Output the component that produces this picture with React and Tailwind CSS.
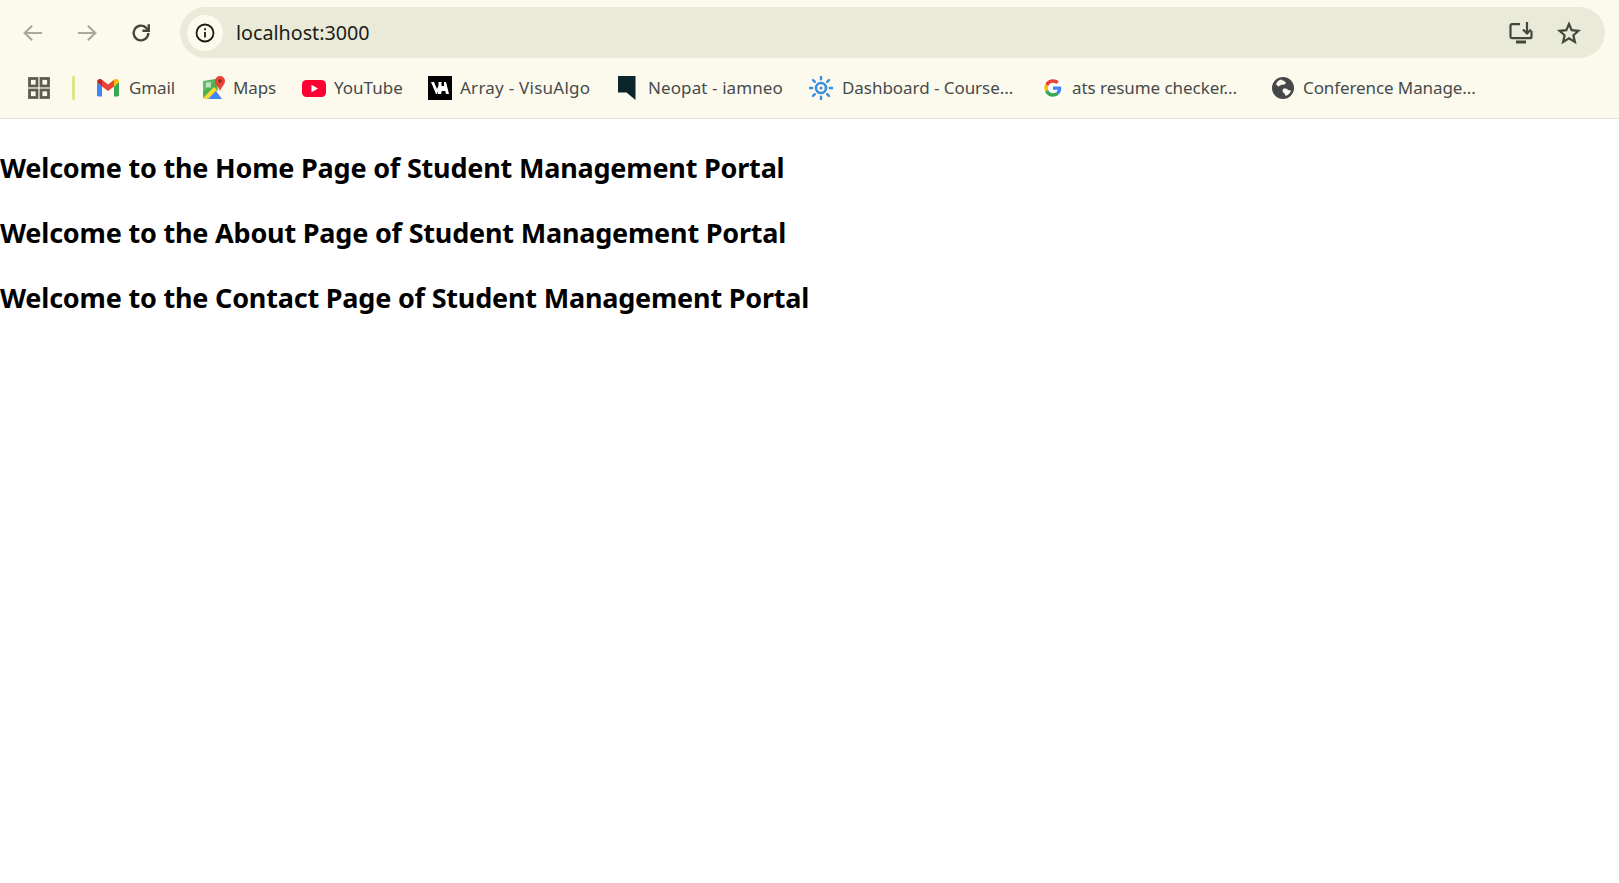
import React from "react";

const GridIcon = () => (
  <svg width="22" height="22" viewBox="0 0 22 22" fill="none" stroke="#5c5c50" strokeWidth="2.800">
    <rect x="1.500" y="1.500" width="7.500" height="7.500" />
    <rect x="13" y="1.500" width="7.500" height="7.500" />
    <rect x="1.500" y="13" width="7.500" height="7.500" />
    <rect x="13" y="13" width="7.500" height="7.500" />
  </svg>
);

const Gmail = () => (
  <svg width="22" height="18" viewBox="0 0 22 18">
    <path d="M0 3v13a1.500 1.500 0 0 0 1.500 1.500H5V7.500z" fill="#4285f4" />
    <path d="M17 7.500V17.500h3.500A1.500 1.500 0 0 0 22 16V3z" fill="#34a853" />
    <path d="M0 3a3 3 0 0 1 4.800-2.400L5 .8v6.700z" fill="#c5221f" />
    <path d="M5 .8 11 5.400 17 .8v6.700l-6 4.600-6-4.600z" fill="#ea4335" />
    <path d="M17 .8l.2-.2A3 3 0 0 1 22 3l-5 4.500z" fill="#fbbc04" />
  </svg>
);

const Maps = () => (
  <svg width="24" height="24" viewBox="0 0 24 24">
    <path d="M1 5 14 3 16 14 5 23 1 22z" fill="#4caf50" />
    <path d="M1 22 12 11l3 3-9 9z" fill="#fdd835" />
    <path d="M6 23l8-8 6 8z" fill="#4285f4" />
    <path d="M1 5h11L1 16z" fill="#66bb6a" />
    <rect x="4" y="6.500" width="5" height="5" fill="#e8f5e9" opacity=".7" />
    <path d="M18 0a5 5 0 0 1 5 5c0 3.500-3.500 5.500-5 10-1.500-4.500-5-6.500-5-10a5 5 0 0 1 5-5z" fill="#ea4335" />
    <circle cx="18" cy="5" r="1.800" fill="#8f2a22" />
  </svg>
);

const YouTube = () => (
  <svg width="24" height="17" viewBox="0 0 24 17">
    <rect width="24" height="17" rx="4.500" fill="#ff0033" />
    <path d="M9.500 4.800v7.400L16 8.500z" fill="#fff" />
  </svg>
);

const VisuAlgo = () => (
  <svg width="24" height="24" viewBox="0 0 24 24">
    <rect width="24" height="24" fill="#000" />
    <path d="M3 6h3l3 7 1.500-3.500V6h3v4l2.500 0V6h2l3 12h-3l-.8-3h-3.400l-.8 3h-3v-3l-1 3H8z" fill="#fff" />
  </svg>
);

const Neopat = () => (
  <svg width="18" height="24" viewBox="0 0 18 24">
    <path d="M0 0h17.500v24L8.500 16.500H0z" fill="#0a262c" />
  </svg>
);

const Sun = () => (
  <svg width="24" height="24" viewBox="0 0 24 24" fill="none">
    <circle cx="12" cy="12" r="5" stroke="#3b8ede" strokeWidth="2.600" />
    <circle cx="12" cy="12" r="1.600" fill="#3b8ede" />
    <g stroke="#3b8ede" strokeWidth="2.400" strokeLinecap="round">
      <path d="M12 .8v2.400M12 20.800v2.400M.8 12h2.400M20.800 12h2.400M4.100 4.100l1.700 1.700M18.200 18.200l1.700 1.700M4.100 19.900l1.700-1.700M18.200 5.800l1.700-1.700" />
    </g>
  </svg>
);

const Google = () => (
  <svg width="22" height="22" viewBox="0 0 48 48">
    <circle cx="24" cy="24" r="24" fill="#fff" />
    <g transform="translate(5 5) scale(.79)">
      <path fill="#ea4335" d="M24 9.500c3.500 0 6.700 1.200 9.200 3.600l6.900-6.900C35.900 2.400 30.500 0 24 0 14.600 0 6.500 5.400 2.600 13.200l8 6.200C12.400 13.700 17.700 9.500 24 9.500z" />
      <path fill="#4285f4" d="M47 24.500c0-1.600-.1-3.100-.4-4.500H24v9h12.900c-.6 3-2.200 5.500-4.700 7.200l7.700 6C44.400 37.900 47 31.800 47 24.500z" />
      <path fill="#fbbc05" d="M10.500 28.600c-.5-1.400-.8-3-.8-4.600s.3-3.200.8-4.600l-8-6.200C.9 16.400 0 20.100 0 24s.9 7.600 2.600 10.800z" />
      <path fill="#34a853" d="M24 48c6.500 0 11.900-2.100 15.900-5.800l-7.700-6c-2.100 1.400-4.900 2.300-8.200 2.300-6.300 0-11.600-4.200-13.500-9.900l-8 6.200C6.500 42.600 14.600 48 24 48z" />
    </g>
  </svg>
);

const Globe = () => (
  <svg width="22" height="22" viewBox="0 0 22 22">
    <circle cx="11" cy="11" r="11" fill="#45474a" />
    <path d="M9 2.500c2 1 4 1.500 5 3.500-1 1.800-3 2-4 1.500L6.500 9.500 4 7.500C4.800 5 6.500 3.200 9 2.500zM11 12c2-.8 4-.3 5 1l3 .5c-.8 2.800-3 4.700-5.500 5.500 0-1.500-.8-2.300-1.800-3-1-.8-1.500-2.800-.7-4z" fill="#fcfaec" />
  </svg>
);

const bookmarks = [
  { label: "Gmail", icon: <Gmail />, box: "w-[32px]", width: "w-[105px]", track: "tracking-[-0.1px]" },
  { label: "Maps", icon: <Maps />, box: "w-[31px]", width: "w-[100px]", track: "tracking-[-0.1px]" },
  { label: "YouTube", icon: <YouTube />, box: "w-[32px]", width: "w-[126px]", track: "tracking-[0px]" },
  { label: "Array - VisuAlgo", icon: <VisuAlgo />, box: "w-[32px]", width: "w-[190px]", track: "tracking-[0.25px]" },
  { label: "Neopat - iamneo", icon: <Neopat />, box: "w-[30px]", width: "w-[191px]", track: "tracking-[0.1px]" },
  { label: "Dashboard - Course...", icon: <Sun />, box: "w-[33px]", width: "w-[233px]", track: "tracking-[-0.05px]" },
  { label: "ats resume checker...", icon: <Google />, box: "w-[30px]", width: "w-[230px]", track: "tracking-[-0.05px]" },
  { label: "Conference Manage...", icon: <Globe />, box: "w-[31px]", width: "w-[210px]", track: "tracking-[-0.1px]" },
];

const headings = ["Home", "About", "Contact"];

export default function App() {
  return (
    <div className="min-h-[883px] bg-white font-['Noto_Sans','Open_Sans',sans-serif]">
      <header className="h-[119px] bg-[#fcfaec] border-b border-[#e6e4d8]">
        <div className="flex items-center h-[65px]">
          <div className="flex items-center w-[180px] pl-[22px]">
            <svg width="22" height="22" viewBox="0 0 24 24" fill="none" stroke="#a9a99c" strokeWidth="2.400">
              <path d="M22 12H3M11 4l-8 8 8 8" />
            </svg>
            <svg className="ml-[32px]" width="22" height="22" viewBox="0 0 24 24" fill="none" stroke="#a9a99c" strokeWidth="2.400">
              <path d="M2 12h19M13 4l8 8-8 8" />
            </svg>
            <svg className="ml-[32px]" width="22" height="22" viewBox="0 0 24 24" fill="none" stroke="#45473a" strokeWidth="2.600">
              <path d="M20 12a8 8 0 1 1-2.600-5.900L20 8.500" />
              <path d="M20.500 2.500v7h-7" fill="none" />
            </svg>
          </div>
          <div className="flex items-center h-[51px] w-[1425px] rounded-full bg-[#e9ebd8] pl-[7px] pr-[24px]">
            <div className="flex items-center justify-center w-[36px] h-[36px] rounded-full bg-[#fcfaec]">
              <svg width="20" height="20" viewBox="0 0 20 20" fill="none" stroke="#1a1a16" strokeWidth="1.800">
                <circle cx="10" cy="10" r="8.500" />
                <path d="M10 9v5.500M10 5.200v2" />
              </svg>
            </div>
            <span className="ml-[13px] text-[19.700px] text-[#1c1c18] flex-1">localhost:3000</span>
            <svg className="mr-[-1px]" width="24" height="22" viewBox="0 0 24 22" fill="none" stroke="#45473a" strokeWidth="2.200">
              <path d="M11 2.200H3a1.500 1.500 0 0 0-1.500 1.500v11A1.500 1.500 0 0 0 3 16.200h18a1.500 1.500 0 0 0 1.500-1.500V9" />
              <path d="M7 20h10" strokeWidth="3" />
              <path d="M18 0v11M14 7.500l4 4 4-4" />
            </svg>
            <svg className="ml-[25px]" width="24" height="24" viewBox="0 0 24 24" fill="none" stroke="#45473a" strokeWidth="2.200" strokeLinejoin="miter">
              <path d="M12 3l2.700 6.200 6.800.6-5.100 4.500 1.500 6.700L12 17.400 6.100 21l1.500-6.700-5.100-4.500 6.800-.6z" />
            </svg>
          </div>
        </div>
        <nav className="flex items-center h-[46px] pl-[28px]">
          <GridIcon />
          <div className="w-[3px] h-[24px] ml-[22px] mr-[22px] bg-[#dce68c]" />
          {bookmarks.map((b) => (
            <div key={b.label} className={`flex items-center shrink-0 ${b.width}`}>
              <div className={`flex items-center shrink-0 ${b.box}`}>{b.icon}</div>
              <span className={`text-[17px] text-[#474a4c] whitespace-nowrap ${b.track}`}>{b.label}</span>
            </div>
          ))}
        </nav>
      </header>
      <main className="pt-[30px]">
        {headings.map((h) => (
          <h1 key={h} className="h-[65px] text-[27px] leading-[38px] font-bold text-black tracking-[-0.2px]">
            Welcome to the {h} Page of Student Management Portal
          </h1>
        ))}
      </main>
    </div>
  );
}
